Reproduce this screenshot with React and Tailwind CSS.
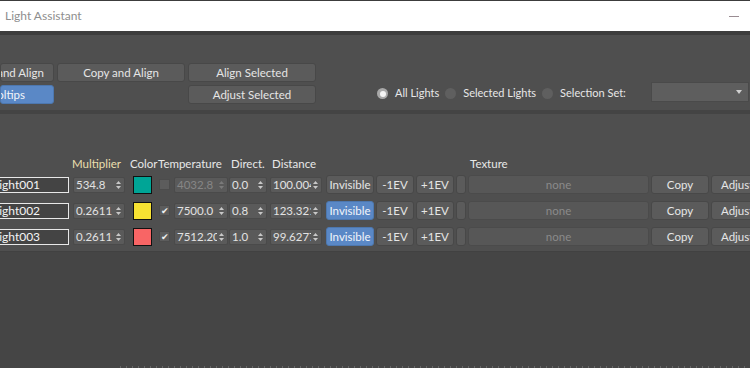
import React from "react";

function Btn({ className = "", blue = false, children }) {
  return (
    <div
      className={
        "h-[19px] shrink-0 rounded-[3px] border flex items-center justify-center text-[11.5px] whitespace-nowrap overflow-hidden " +
        (blue
          ? "bg-[#5a88c6] border-[#4d77ae] text-[#f2f5fa] "
          : "bg-[#5b5b5b] border-[#484848] text-[#e6e6e6] ") +
        className
      }
    >
      {children}
    </div>
  );
}

function Arrows({ dim }) {
  const c = dim ? "#7a7a7a" : "#c8c8c8";
  return (
    <svg width="5" height="10" viewBox="0 0 5 10" className="shrink-0">
      <polygon points="0,4 2.5,1 5,4" fill={c} />
      <polygon points="0,6 2.5,9 5,6" fill={c} />
    </svg>
  );
}

function Spin({ className = "", value, dim = false }) {
  return (
    <div
      className={
        "h-[16px] shrink-0 flex items-center bg-[#5a5a5a] border border-[#4a4a4a] rounded-[2px] " +
        className
      }
    >
      <div
        className={
          "flex-1 overflow-hidden whitespace-nowrap pl-[2px] text-[11.5px] leading-[14px] " +
          (dim ? "text-[#868686]" : "text-[#e2e2e2]")
        }
      >
        {value}
      </div>
      <div className="w-[5px] ml-[2px] mr-[3px] flex items-center">
        <Arrows dim={dim} />
      </div>
    </div>
  );
}

function Radio({ on }) {
  return (
    <div
      className={
        "w-[11px] h-[11px] rounded-full flex items-center justify-center shrink-0 " +
        (on ? "bg-[#a8a8a8]" : "bg-[#5f5f5f]")
      }
    >
      {on && <div className="w-[6px] h-[6px] rounded-full bg-[#f4f4f4]" />}
    </div>
  );
}

function Row({ name, mult, color, checked, temp, dir, dist, invisible }) {
  return (
    <div className="flex items-center h-[19px]">
      <div className="ml-[-12px] w-[81px] h-[16px] shrink-0 bg-[#444444] border border-[#e8e8e8] flex items-center pl-[4px] text-[12px] text-[#f4f4f4] whitespace-nowrap overflow-hidden">
        {name}
      </div>
      <Spin className="ml-[4px] w-[52px]" value={mult} />
      <div
        className="ml-[8px] w-[19px] h-[18px] shrink-0 border border-[#111111]"
        style={{ backgroundColor: color }}
      />
      <div className="ml-[7px] w-[11px] h-[11px] shrink-0 bg-[#5c5c5c] border border-[#4c4c4c] flex items-center justify-center text-[9px] leading-none text-[#f0f0f0]">
        {checked ? "✔" : ""}
      </div>
      <Spin className="ml-[4px] w-[54px]" value={temp} dim={!checked} />
      <Spin className="ml-[1px] w-[38px]" value={dir} />
      <Spin className="ml-[3px] w-[52px]" value={dist} />
      <Btn className="ml-[4px] w-[48px]" blue={invisible}>
        Invisible
      </Btn>
      <Btn className="ml-[2px] w-[38px]">-1EV</Btn>
      <Btn className="ml-[2px] w-[38px]">+1EV</Btn>
      <Btn className="ml-[2px] w-[10px]"></Btn>
      <div className="ml-[2px] w-[181px] h-[19px] shrink-0 rounded-[3px] bg-[#575757] border border-[#4b4b4b] flex items-center justify-center text-[11.5px] text-[#8a8a8a]">
        none
      </div>
      <Btn className="ml-[2px] w-[58px]">Copy</Btn>
      <Btn className="ml-[2px] w-[60px] justify-start pl-[9px]">Adjust</Btn>
    </div>
  );
}

export default function App() {
  return (
    <div className="w-[750px] h-[368px] overflow-hidden bg-[#454545] font-['Lato',sans-serif] relative">
      {/* title bar */}
      <div className="h-[31px] bg-white border-t border-[#3c3c3c] flex items-center justify-between">
        <div className="pl-[5px] text-[12px] text-[#8e8e8e]">Light Assistant</div>
        <div className="mr-[11px] w-[10px] h-[1px] bg-[#9a8c92]" />
      </div>
      <div className="h-[4px] bg-[#3d3d3d]" />

      {/* top panel */}
      <div className="h-[75px] bg-[#4f4f4f] pt-[28px] overflow-hidden">
        <div className="flex">
          <Btn className="w-[54px] justify-end pr-[9px]">Move and Align</Btn>
          <Btn className="ml-[3px] w-[128px]">Copy and Align</Btn>
          <Btn className="ml-[3px] w-[128px]">Align Selected</Btn>
        </div>
        <div className="flex items-center mt-[3px] h-[19px]">
          <Btn blue className="w-[54px] justify-end pr-[28px]">Tooltips</Btn>
          <Btn className="ml-[134px] w-[128px]">Adjust Selected</Btn>
          <div className="ml-[61px] flex items-center mt-[-2px] text-[11px] text-[#e8e8e8] whitespace-nowrap">
            <Radio on />
            <span className="ml-[7px]">All Lights</span>
            <div className="ml-[6px]"><Radio /></div>
            <span className="ml-[7px]">Selected Lights</span>
            <div className="ml-[6px]"><Radio /></div>
            <span className="ml-[7px]">Selection Set:</span>
          </div>
          <div className="ml-auto mr-[1px] mt-[-6px] w-[98px] h-[20px] bg-[#5e5e5e] border border-[#4a4a4a] flex items-center justify-end pr-[6px]">
            <svg width="6" height="4" viewBox="0 0 6 4">
              <polygon points="0,0 6,0 3,4" fill="#d0d0d0" />
            </svg>
          </div>
        </div>
      </div>

      <div className="h-[4px] bg-[#444444]" />

      {/* table panel */}
      <div className="h-[138px] bg-[#4f4f4f] pt-[41px] overflow-hidden border-b border-[#414141]">
        <div className="relative h-[16px] text-[11.5px] text-[#e8e8e8] whitespace-nowrap">
          <span className="absolute left-[72px] top-0 text-[#eadfae]">Multiplier</span>
          <span className="absolute left-[130px] top-0">Color</span>
          <span className="absolute left-[158px] top-0">Temperature</span>
          <span className="absolute left-[231px] top-0">Direct.</span>
          <span className="absolute left-[272px] top-0">Distance</span>
          <span className="absolute left-[470px] top-0">Texture</span>
        </div>
        <div className="mt-[4px] flex flex-col gap-[7px]">
          <Row name="Light001" mult="534.8" color="#00a596" checked={false} temp="4032.8" dir="0.0" dist="100.0045" invisible={false} />
          <Row name="Light002" mult="0.2611" color="#f7e232" checked temp="7500.0" dir="0.8" dist="123.3217" invisible />
          <Row name="Light003" mult="0.2611" color="#f86565" checked temp="7512.209" dir="1.0" dist="99.62771" invisible />
        </div>
      </div>

      <div className="absolute left-[120px] right-0 bottom-0 h-[2px] bg-[repeating-linear-gradient(90deg,#8a8a8a_0px,#8a8a8a_1px,transparent_1px,transparent_6px)] opacity-50" />
    </div>
  );
}
